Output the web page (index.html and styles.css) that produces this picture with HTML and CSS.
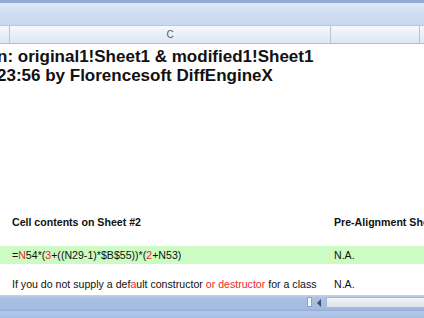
FILE: index.html
```html
<!DOCTYPE html>
<html>
<head>
<meta charset="utf-8">
<link rel="stylesheet" href="styles.css">
</head>
<body>
<div class="app">
  <div class="topline"></div>
  <div class="toolbar"></div>
  <div class="colheads">
    <div class="ch ch-a"></div>
    <div class="ch ch-c">C</div>
    <div class="ch ch-d"></div>
    <div class="ch ch-e"></div>
  </div>
  <div class="sheet">
    <div class="title">
      <div class="tline">n: original1!Sheet1 &amp; modified1!Sheet1</div>
      <div class="tline">23:56 by Florencesoft DiffEngineX</div>
    </div>
    <div class="row head">
      <div class="cell c">Cell contents on Sheet #2</div>
      <div class="cell d">Pre-Alignment Sheet</div>
    </div>
    <div class="row green">
      <div class="cell c">=<span class="r">N</span>54*(<span class="r">3</span>+((N29-1)*$B$55))*(<span class="r">2</span>+N53)</div>
      <div class="cell d">N.A.</div>
    </div>
    <div class="row plain">
      <div class="cell c">If you do not supply a def<span class="r">a</span>ult constructor <span class="r">or destructor</span> for a class</div>
      <div class="cell d">N.A.</div>
    </div>
  </div>
  <div class="bottom">
    <div class="tabs"></div>
    <div class="split"></div>
    <div class="arrow"><svg width="6" height="8" viewBox="0 0 6 8"><path d="M5 0 L1 4 L5 8 Z" fill="#3c4e6a"/></svg></div>
    <div class="trough"></div>
  </div>
</div>
</body>
</html>
```
FILE: styles.css
```css
html, body {
  margin: 0;
  padding: 0;
  background: #fff;
}
.app {
  width: 424px;
  height: 318px;
  overflow: hidden;
  display: flex;
  flex-direction: column;
  font-family: "Liberation Sans", Arial, sans-serif;
  color: #111;
}
.topline {
  height: 3px;
  background: #93acd6;
  flex: none;
}
.toolbar {
  height: 22px;
  flex: none;
  background: linear-gradient(#dfe9f6, #cfdcf0 55%, #c8d8ee);
  border-bottom: 1px solid #b7c8df;
}
.colheads {
  height: 17px;
  flex: none;
  display: flex;
  background: linear-gradient(#f7f9fc, #e9eff7 50%, #dde6f1);
  border-bottom: 1px solid #a9bdd6;
}
.ch {
  border-right: 1px solid #b3c4d9;
  font-size: 10px;
  line-height: 17px;
  color: #4a5d78;
  text-align: center;
}
.ch-a { width: 9px; }
.ch-c { width: 320px; }
.ch-d { width: 88px; }
.ch-e { flex: 1; border-right: none; }
.sheet {
  flex: 1;
  display: flex;
  flex-direction: column;
  overflow: hidden;
}
.title {
  padding-top: 3px;
  margin-left: -3px;
  font-size: 17px;
  font-weight: bold;
  line-height: 19px;
  white-space: nowrap;
  height: 166px;
  flex: none;
}
.row {
  display: flex;
  height: 18px;
  flex: none;
  font-size: 10.6px;
  line-height: 18px;
  white-space: nowrap;
}
.row.head { font-weight: bold; }
.row.green {
  margin-top: 15px;
  background: #ccfcc4;
}
.row.plain { margin-top: 11px; }
.cell.c {
  width: 322px;
  padding-left: 12px;
  overflow: hidden;
}
.cell.d {
  flex: 1;
  overflow: hidden;
}
.r { color: #ee2a2a; }
.bottom {
  height: 23px;
  flex: none;
  display: flex;
  align-items: flex-start;
  background: linear-gradient(#c2d3ec, #a9c0e3 15%, #a3bbe0 62%, #8ea9d6 66%, #b4c8e8 72%, #a8bee2);
  padding-top: 2px;
  box-sizing: border-box;
}
.tabs { width: 307px; height: 11px; }
.split {
  width: 5px;
  height: 10px;
  background: #f4f6fa;
  border: 1px solid #8fa3c0;
  box-sizing: border-box;
}
.arrow {
  width: 14px;
  height: 11px;
  display: flex;
  align-items: center;
  justify-content: center;
}
.trough {
  flex: 1;
  height: 11px;
  background: linear-gradient(#f1f3f7, #dfe4ec);
  border: 1px solid #a9b8cc;
  border-right: none;
  box-sizing: border-box;
}
```
